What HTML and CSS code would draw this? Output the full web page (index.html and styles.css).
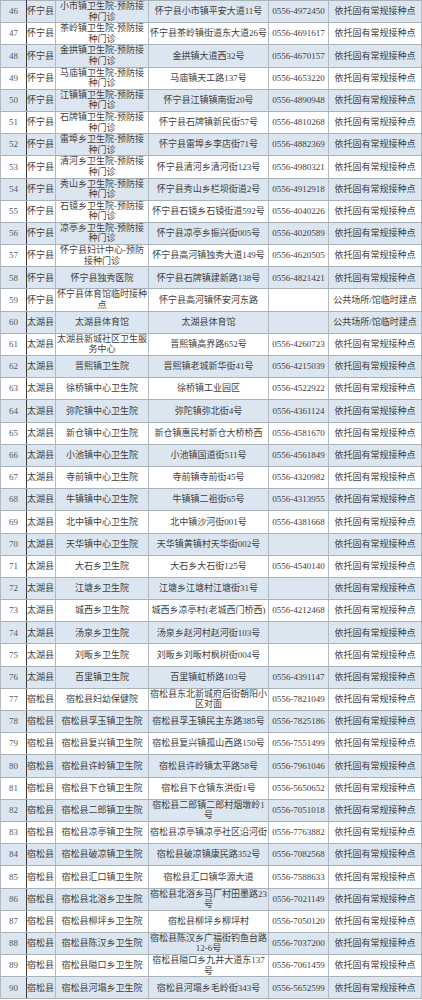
FILE: index.html
```html
<!DOCTYPE html>
<html lang="zh">
<head>
<meta charset="utf-8">
<title>接种点列表</title>
<link rel="stylesheet" href="styles.css">
</head>
<body>
<table class="sites">
<colgroup>
<col class="c-num"><col class="c-county"><col class="c-name"><col class="c-addr"><col class="c-phone"><col class="c-type">
</colgroup>
<tbody>
<tr class="alt"><td class="num">46</td><td class="county">怀宁县</td><td>小市镇卫生院-预防接种门诊</td><td>怀宁县小市镇平安大道11号</td><td>0556-4972450</td><td>依托固有常规接种点</td></tr>
<tr><td class="num">47</td><td class="county">怀宁县</td><td>茶岭镇卫生院-预防接种门诊</td><td>怀宁县茶岭镇街道东大道26号</td><td>0556-4691617</td><td>依托固有常规接种点</td></tr>
<tr class="alt"><td class="num">48</td><td class="county">怀宁县</td><td>金拱镇卫生院-预防接种门诊</td><td>金拱镇大道西32号</td><td>0556-4670157</td><td>依托固有常规接种点</td></tr>
<tr><td class="num">49</td><td class="county">怀宁县</td><td>马庙镇卫生院-预防接种门诊</td><td>马庙镇天工路137号</td><td>0556-4653220</td><td>依托固有常规接种点</td></tr>
<tr class="alt"><td class="num">50</td><td class="county">怀宁县</td><td>江镇镇卫生院-预防接种门诊</td><td>怀宁县江镇镇南街20号</td><td>0556-4890948</td><td>依托固有常规接种点</td></tr>
<tr><td class="num">51</td><td class="county">怀宁县</td><td>石牌镇卫生院-预防接种门诊</td><td>怀宁县石牌镇新民街57号</td><td>0556-4810268</td><td>依托固有常规接种点</td></tr>
<tr class="alt"><td class="num">52</td><td class="county">怀宁县</td><td>雷埠乡卫生院-预防接种门诊</td><td>怀宁县雷埠乡李店街71号</td><td>0556-4882369</td><td>依托固有常规接种点</td></tr>
<tr><td class="num">53</td><td class="county">怀宁县</td><td>清河乡卫生院-预防接种门诊</td><td>怀宁县清河乡清河街123号</td><td>0556-4980321</td><td>依托固有常规接种点</td></tr>
<tr class="alt"><td class="num">54</td><td class="county">怀宁县</td><td>秀山乡卫生院-预防接种门诊</td><td>怀宁县秀山乡栏坝街道2号</td><td>0556-4912918</td><td>依托固有常规接种点</td></tr>
<tr><td class="num">55</td><td class="county">怀宁县</td><td>石镜乡卫生院-预防接种门诊</td><td>怀宁县石镜乡石镜街道592号</td><td>0556-4040226</td><td>依托固有常规接种点</td></tr>
<tr class="alt"><td class="num">56</td><td class="county">怀宁县</td><td>凉亭乡卫生院-预防接种门诊</td><td>怀宁县凉亭乡振兴街005号</td><td>0556-4020589</td><td>依托固有常规接种点</td></tr>
<tr><td class="num">57</td><td class="county">怀宁县</td><td>怀宁县妇计中心-预防接种门诊</td><td>怀宁县高河镇独秀大道149号</td><td>0556-4620505</td><td>依托固有常规接种点</td></tr>
<tr class="alt"><td class="num">58</td><td class="county">怀宁县</td><td>怀宁县独秀医院</td><td>怀宁县石牌镇建新路138号</td><td>0556-4821421</td><td>依托固有常规接种点</td></tr>
<tr><td class="num">59</td><td class="county">怀宁县</td><td>怀宁县体育馆临时接种点</td><td>怀宁县高河镇怀安河东路</td><td></td><td>公共场所/馆临时建点</td></tr>
<tr class="alt"><td class="num">60</td><td class="county">太湖县</td><td>太湖县体育馆</td><td>太湖县体育馆</td><td></td><td>公共场所/馆临时建点</td></tr>
<tr><td class="num">61</td><td class="county">太湖县</td><td>太湖县新城社区卫生服务中心</td><td>晋熙镇高界路652号</td><td>0556-4260723</td><td>依托固有常规接种点</td></tr>
<tr class="alt"><td class="num">62</td><td class="county">太湖县</td><td>晋熙镇卫生院</td><td>晋熙镇老城新华街41号</td><td>0556-4215039</td><td>依托固有常规接种点</td></tr>
<tr><td class="num">63</td><td class="county">太湖县</td><td>徐桥镇中心卫生院</td><td>徐桥镇工业园区</td><td>0556-4522922</td><td>依托固有常规接种点</td></tr>
<tr class="alt"><td class="num">64</td><td class="county">太湖县</td><td>弥陀镇中心卫生院</td><td>弥陀镇弥北街4号</td><td>0556-4361124</td><td>依托固有常规接种点</td></tr>
<tr><td class="num">65</td><td class="county">太湖县</td><td>新仓镇中心卫生院</td><td>新仓镇惠民村新仓大桥桥西</td><td>0556-4581670</td><td>依托固有常规接种点</td></tr>
<tr class="alt"><td class="num">66</td><td class="county">太湖县</td><td>小池镇中心卫生院</td><td>小池镇国道街511号</td><td>0556-4561849</td><td>依托固有常规接种点</td></tr>
<tr><td class="num">67</td><td class="county">太湖县</td><td>寺前镇中心卫生院</td><td>寺前镇寺前街45号</td><td>0556-4320982</td><td>依托固有常规接种点</td></tr>
<tr class="alt"><td class="num">68</td><td class="county">太湖县</td><td>牛镇镇中心卫生院</td><td>牛镇镇二祖街65号</td><td>0556-4313955</td><td>依托固有常规接种点</td></tr>
<tr><td class="num">69</td><td class="county">太湖县</td><td>北中镇中心卫生院</td><td>北中镇沙河街001号</td><td>0556-4381668</td><td>依托固有常规接种点</td></tr>
<tr class="alt"><td class="num">70</td><td class="county">太湖县</td><td>天华镇中心卫生院</td><td>天华镇黄镇村天华街002号</td><td></td><td>依托固有常规接种点</td></tr>
<tr><td class="num">71</td><td class="county">太湖县</td><td>大石乡卫生院</td><td>大石乡大石街125号</td><td>0556-4540140</td><td>依托固有常规接种点</td></tr>
<tr class="alt"><td class="num">72</td><td class="county">太湖县</td><td>江塘乡卫生院</td><td>江塘乡江塘村江塘街31号</td><td></td><td>依托固有常规接种点</td></tr>
<tr><td class="num">73</td><td class="county">太湖县</td><td>城西乡卫生院</td><td class="nowrap">城西乡凉亭村(老城西门桥西)</td><td>0556-4212468</td><td>依托固有常规接种点</td></tr>
<tr class="alt"><td class="num">74</td><td class="county">太湖县</td><td>汤泉乡卫生院</td><td>汤泉乡赵河村赵河街103号</td><td></td><td>依托固有常规接种点</td></tr>
<tr><td class="num">75</td><td class="county">太湖县</td><td>刘畈乡卫生院</td><td>刘畈乡刘畈村枫树街004号</td><td></td><td>依托固有常规接种点</td></tr>
<tr class="alt"><td class="num">76</td><td class="county">太湖县</td><td>百里镇卫生院</td><td>百里镇虹桥路103号</td><td>0556-4391147</td><td>依托固有常规接种点</td></tr>
<tr><td class="num">77</td><td class="county">宿松县</td><td>宿松县妇幼保健院</td><td>宿松县东北新城府后街朝阳小区对面</td><td>0556-7821049</td><td>依托固有常规接种点</td></tr>
<tr class="alt"><td class="num">78</td><td class="county">宿松县</td><td>宿松县孚玉镇卫生院</td><td>宿松县孚玉镇民主东路385号</td><td>0556-7825186</td><td>依托固有常规接种点</td></tr>
<tr><td class="num">79</td><td class="county">宿松县</td><td>宿松县复兴镇卫生院</td><td>宿松县复兴镇孤山西路150号</td><td>0556-7551499</td><td>依托固有常规接种点</td></tr>
<tr class="alt"><td class="num">80</td><td class="county">宿松县</td><td>宿松县许岭镇卫生院</td><td>宿松县许岭镇太平路58号</td><td>0556-7961046</td><td>依托固有常规接种点</td></tr>
<tr><td class="num">81</td><td class="county">宿松县</td><td>宿松县下仓镇卫生院</td><td>宿松县下仓镇东洪街1号</td><td>0556-5650652</td><td>依托固有常规接种点</td></tr>
<tr class="alt"><td class="num">82</td><td class="county">宿松县</td><td>宿松县二郎镇卫生院</td><td>宿松县二郎镇二郎村烟墩岭1号</td><td>0556-7051018</td><td>依托固有常规接种点</td></tr>
<tr><td class="num">83</td><td class="county">宿松县</td><td>宿松县凉亭镇卫生院</td><td>宿松县凉亭镇凉亭社区沿河街</td><td>0556-7763882</td><td>依托固有常规接种点</td></tr>
<tr class="alt"><td class="num">84</td><td class="county">宿松县</td><td>宿松县破凉镇卫生院</td><td>宿松县破凉镇康民路352号</td><td>0556-7082568</td><td>依托固有常规接种点</td></tr>
<tr><td class="num">85</td><td class="county">宿松县</td><td>宿松县汇口镇卫生院</td><td>宿松县汇口镇华源大道</td><td>0556-7588633</td><td>依托固有常规接种点</td></tr>
<tr class="alt"><td class="num">86</td><td class="county">宿松县</td><td>宿松县北浴乡卫生院</td><td>宿松县北浴乡马厂村田墨路23号</td><td>0556-7021149</td><td>依托固有常规接种点</td></tr>
<tr><td class="num">87</td><td class="county">宿松县</td><td>宿松县柳坪乡卫生院</td><td>宿松县柳坪乡柳坪村</td><td>0556-7050120</td><td>依托固有常规接种点</td></tr>
<tr class="alt"><td class="num">88</td><td class="county">宿松县</td><td>宿松县陈汉乡卫生院</td><td>宿松县陈汉乡广福街钓鱼台路12-6号</td><td>0556-7037200</td><td>依托固有常规接种点</td></tr>
<tr><td class="num">89</td><td class="county">宿松县</td><td>宿松县隘口乡卫生院</td><td>宿松县隘口乡九井大道东137号</td><td>0556-7061459</td><td>依托固有常规接种点</td></tr>
<tr class="alt"><td class="num">90</td><td class="county">宿松县</td><td>宿松县河塌乡卫生院</td><td>宿松县河塌乡毛岭街343号</td><td>0556-5652599</td><td>依托固有常规接种点</td></tr>
</tbody>
</table>
</body>
</html>
```

FILE: styles.css
```css
html, body {
  margin: 0;
  padding: 0;
  background: #ffffff;
}

.sites {
  width: 421px;
  table-layout: fixed;
  border-collapse: collapse;
  font-family: "Liberation Serif", "Noto Sans CJK SC", serif;
  font-size: 9px;
  line-height: 10.6px;
  color: #3e3e3e;
  border-left: 1px solid #6a6e72;
  border-right: 1px solid #9aa2aa;
}

.c-num { width: 26px; }
.c-county { width: 29px; }
.c-name { width: 93px; }
.c-addr { width: 120px; }
.c-phone { width: 60px; }
.c-type { width: 93px; }

.sites tr {
  height: 22.2px;
}

.sites tr.alt {
  background: #dbe6f1;
}

.sites td {
  padding: 0 1px;
  text-align: center;
  vertical-align: middle;
  border-top: 1px solid #a9b1b9;
  border-bottom: 1px solid #a9b1b9;
  border-left: 1px solid #b3bac1;
  border-right: 1px solid #b3bac1;
  overflow: visible;
}

.sites td.num {
  color: #555a5e;
  border-right: 1px solid #3a3a3a;
}

.sites td.county {
  padding: 0;
  text-align: left;
}

.sites td.nowrap {
  white-space: nowrap;
  word-spacing: 2px;
}
```
